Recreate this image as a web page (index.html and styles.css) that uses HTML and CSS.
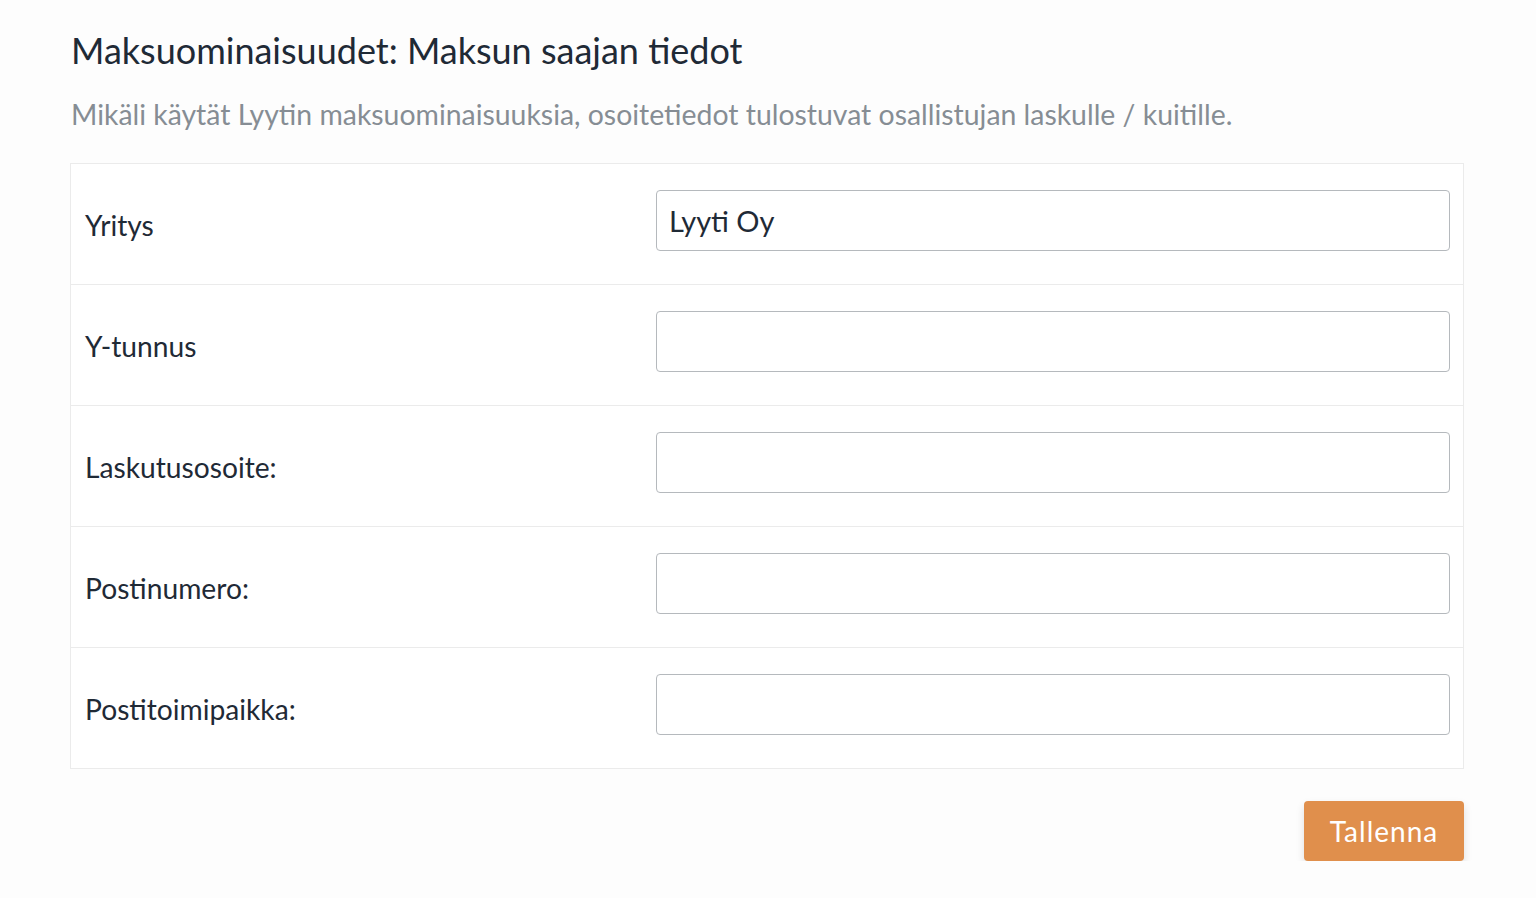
FILE: index.html
```html
<!DOCTYPE html>
<html lang="fi">
<head>
<meta charset="utf-8">
<title>Maksuominaisuudet</title>
<link rel="stylesheet" href="styles.css">
</head>
<body>
<main class="page">
  <h1 class="title">Maksuominaisuudet: Maksun saajan tiedot</h1>
  <p class="lead">Mikäli käytät Lyytin maksuominaisuuksia, osoitetiedot tulostuvat osallistujan laskulle / kuitille.</p>
  <div class="card">
    <div class="row">
      <label class="label">Yritys</label>
      <div class="field"><input class="input" type="text" value="Lyyti Oy"></div>
    </div>
    <div class="row">
      <label class="label">Y-tunnus</label>
      <div class="field"><input class="input" type="text"></div>
    </div>
    <div class="row">
      <label class="label">Laskutusosoite:</label>
      <div class="field"><input class="input" type="text"></div>
    </div>
    <div class="row">
      <label class="label">Postinumero:</label>
      <div class="field"><input class="input" type="text"></div>
    </div>
    <div class="row">
      <label class="label">Postitoimipaikka:</label>
      <div class="field"><input class="input" type="text"></div>
    </div>
  </div>
  <div class="actions">
    <button class="btn" type="button">Tallenna</button>
  </div>
</main>
</body>
</html>
```
FILE: styles.css
```css
* { box-sizing: border-box; }
html, body { margin: 0; padding: 0; }
body {
  background: #fdfdfd;
  font-family: Lato, "Open Sans", "Liberation Sans", sans-serif;
  color: #1f2a36;
}
.page {
  padding: 28px 72px 0 70px;
  width: 1536px;
}
.title {
  margin: 0 0 0 1px;
  font-weight: 400;
  font-size: 36px;
  line-height: 44px;
  color: #1f2a36;
}
.lead {
  margin: 24px 0 31px 1px;
  font-size: 28.4px;
  line-height: 36px;
  color: #868d94;
}
.card {
  background: #fff;
  border: 1px solid #ebebeb;
  width: 1394px;
}
.row {
  display: grid;
  grid-template-columns: 571px 1fr;
  align-items: center;
  height: 121px;
  border-top: 1px solid #ebebeb;
  padding: 0 13px 0 14px;
}
.row:first-child { border-top: 0; height: 120px; }
.label {
  font-size: 28.2px;
  color: #1f2a36;
  padding-top: 1px;
}
.field { padding-bottom: 7px; }
.input {
  display: block;
  width: 100%;
  height: 61px;
  border: 1px solid #b5b9bd;
  border-radius: 4px;
  background: #fff;
  font-family: inherit;
  font-size: 29px;
  color: #1f2a36;
  padding: 0 12px;
  outline: none;
}
.actions {
  display: flex;
  justify-content: flex-end;
  width: 1394px;
  padding-top: 32px;
}
.btn {
  width: 160px;
  height: 60px;
  border: 0;
  border-radius: 4px;
  background: #e08f4c;
  color: #fff;
  font-family: inherit;
  font-size: 28px;
  letter-spacing: 1px;
  box-shadow: 0 4px 8px rgba(0,0,0,0.12);
  cursor: pointer;
}
```
